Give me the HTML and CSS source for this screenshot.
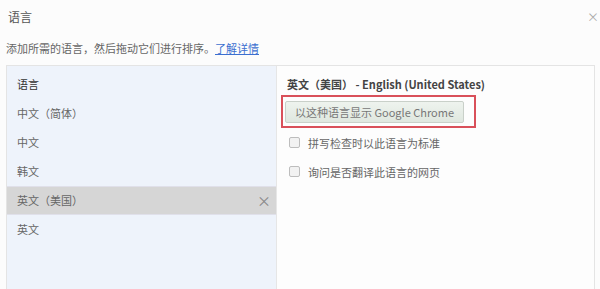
FILE: index.html
```html
<html>
<head>
    <meta content="text/html;charset=utf-8" http-equiv="Content-Type"/>
    <link rel="stylesheet" href="styles.css">
</head>
<body>
<div class="top">
    <span class="title">语言</span>
    <span class="close">×</span>
</div>
<p class="intro">添加所需的语言，然后拖动它们进行排序。<a href="#">了解详情</a></p>
<div class="box">
    <div class="langs">
        <div class="row head">语言</div>
        <div class="row">中文（简体）</div>
        <div class="row">中文</div>
        <div class="row">韩文</div>
        <div class="row selected">英文（美国）<span class="remove">×</span></div>
        <div class="row">英文</div>
    </div>
    <div class="detail">
        <div class="detail-head">英文（美国） - English (United States)</div>
        <div class="mark">
            <button class="show">以这种语言显示 Google Chrome</button>
        </div>
        <label class="check"><span class="box-ico"></span>拼写检查时以此语言为标准</label>
        <label class="check"><span class="box-ico"></span>询问是否翻译此语言的网页</label>
    </div>
</div>
</body>
</html>
```

FILE: styles.css
```css
body {
    margin: 0;
    font-family: "Noto Sans CJK SC", "Liberation Sans", sans-serif;
    font-size: 11px;
    color: #555;
    background: #fcfcfc;
    overflow: hidden;
}
.top {
    display: flex;
    justify-content: space-between;
    height: 22px;
    padding: 6px 0 0 8px;
    line-height: 22px;
}
.title {
    font-size: 12px;
    color: #555;
}
.close {
    margin-right: 1px;
    font-size: 12px;
    color: #aaa;
}
.intro {
    margin: 9px 0 0 6px;
    height: 22px;
    line-height: 22px;
    color: #666;
}
.intro a {
    color: #3b6fd0;
    text-decoration: underline;
}
.box {
    display: flex;
    margin: 6px 5px 0 6px;
    height: 223px;
    border: 1px solid #e4e4e4;
    border-bottom: none;
}
.langs {
    width: 269px;
    padding-top: 4px;
    background: #eef3fb;
    border-right: 1px solid #e6e6e6;
}
.row {
    display: flex;
    justify-content: space-between;
    height: 29px;
    line-height: 29px;
    padding: 0 5px 0 10px;
    color: #666;
}
.row.head {
    color: #333;
}
.row.selected {
    background: #d6d6d6;
    border-top: 1px solid #e0e0ea;
    border-bottom: 1px solid #e0e0ea;
    height: 27px;
    line-height: 27px;
}
.remove {
    font-size: 14px;
    color: #888;
}
.detail {
    flex: 1;
    padding-left: 4px;
    background: #fdfdfd;
}
.detail-head {
    height: 22px;
    line-height: 22px;
    padding: 7px 0 0 6px;
    color: #444;
    font-weight: bold;
}
.mark {
    width: 189px;
    height: 25px;
    padding: 4px 0 0 2px;
    border: 2px solid #d9505a;
}
.show {
    width: 179px;
    height: 22px;
    padding: 0;
    font-family: inherit;
    font-size: 11px;
    color: #777;
    background: linear-gradient(#eef3ee, #dfe7df);
    border: 1px solid #c9d0c9;
    border-radius: 2px;
}
.check {
    display: flex;
    align-items: center;
    height: 29px;
    padding-left: 8px;
    color: #666;
}
.box-ico {
    width: 9px;
    height: 9px;
    margin-right: 8px;
    border: 1px solid #bdbdbd;
    border-radius: 2px;
    background: #f2f2f2;
}
```
